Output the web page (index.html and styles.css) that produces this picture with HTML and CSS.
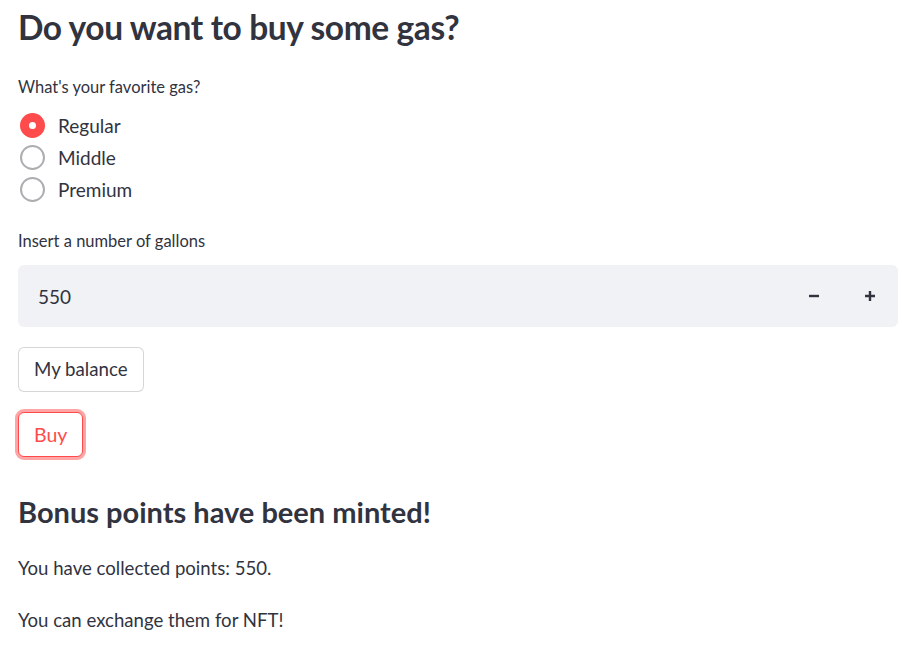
FILE: index.html
```html
<!DOCTYPE html>
<html>
<head>
<meta charset="utf-8">
<link rel="stylesheet" href="styles.css">
</head>
<body>
<main class="main">
  <h1 class="title">Do you want to buy some gas?</h1>
  <div class="label label-radio">What's your favorite gas?</div>
  <div class="radios">
    <div class="radio"><span class="circle checked"></span><span class="rtext">Regular</span></div>
    <div class="radio"><span class="circle"></span><span class="rtext">Middle</span></div>
    <div class="radio"><span class="circle"></span><span class="rtext">Premium</span></div>
  </div>
  <div class="label label-num">Insert a number of gallons</div>
  <div class="numinput">
    <span class="numval">550</span>
    <span class="steps">
      <span class="step"><svg width="12" height="12" viewBox="0 0 12 12"><path d="M1 6h10" stroke="#31333f" stroke-width="2.4"/></svg></span>
      <span class="step"><svg width="12" height="12" viewBox="0 0 12 12"><path d="M1 6h10M6 1v10" stroke="#31333f" stroke-width="2.4"/></svg></span>
    </span>
  </div>
  <div class="btnrow"><button class="btn">My balance</button></div>
  <div class="btnrow btnrow-buy"><button class="btn btn-focus">Buy</button></div>
  <h2 class="subtitle">Bonus points have been minted!</h2>
  <p class="text">You have collected points: 550.</p>
  <p class="text">You can exchange them for NFT!</p>
</main>
</body>
</html>
```
FILE: styles.css
```css
html, body {
  margin: 0;
  padding: 0;
  background: #ffffff;
}
body {
  font-family: "Lato", "Liberation Sans", sans-serif;
  color: #31333f;
}
.main {
  width: 880px;
  padding: 0 20px 0 18px;
  display: flex;
  flex-direction: column;
}
.title {
  margin: 0;
  font-size: 33.5px;
  font-weight: 700;
  line-height: 54px;
  letter-spacing: -0.4px;
}
.label {
  font-size: 16.5px;
  line-height: 22px;
}
.label-radio { margin-top: 22px; }
.radios {
  margin-top: 11px;
  display: flex;
  flex-direction: column;
}
.radio {
  height: 32px;
  display: flex;
  align-items: center;
  gap: 13px;
}
.circle {
  width: 25px;
  height: 25px;
  box-sizing: border-box;
  border-radius: 50%;
  border: 2.5px solid #aeaeb2;
  margin-left: 2px;
}
.circle.checked {
  border: 9px solid #ff4b4b;
  background: #fff;
}
.rtext {
  font-size: 19px;
}
.label-num { margin-top: 25px; }
.numinput {
  margin-top: 13px;
  height: 62px;
  background: #f0f2f6;
  border-radius: 6px;
  display: flex;
  align-items: center;
  justify-content: space-between;
  padding-left: 20px;
}
.numval {
  font-size: 19px;
}
.steps {
  display: flex;
  height: 100%;
}
.step {
  width: 56px;
  display: flex;
  align-items: center;
  justify-content: center;
}
.btnrow {
  margin-top: 20px;
  display: flex;
}
.btn {
  font-family: inherit;
  font-size: 18.7px;
  color: #31333f;
  background: #fff;
  border: 1px solid rgba(49, 51, 63, 0.2);
  border-radius: 6px;
  height: 45px;
  padding: 0 15px;
  line-height: 1;
}
.btn-focus {
  font-size: 19.5px;
  color: #ff4b4b;
  border-color: #ff4b4b;
  box-shadow: 0 0 0 3px rgba(255, 75, 75, 0.5);
}
.subtitle {
  margin: 35px 0 0;
  font-size: 29px;
  font-weight: 700;
  line-height: 40px;
}
.text {
  margin: 22px 0 0;
  font-size: 18.6px;
  line-height: 28px;
}
.text + .text {
  margin-top: 24px;
}
```
